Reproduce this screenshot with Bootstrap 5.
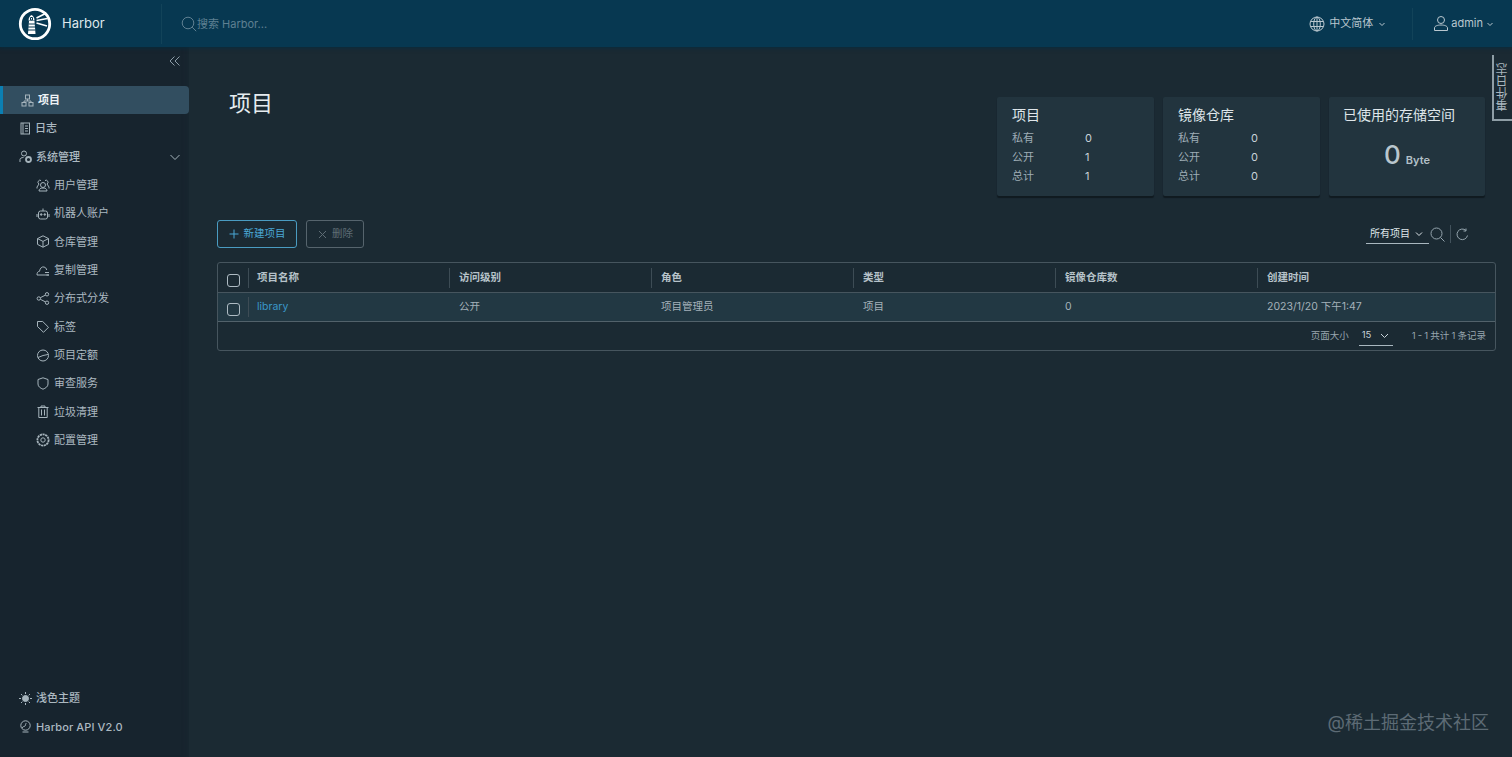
<!doctype html>
<html lang="zh-CN">
<head>
<meta charset="utf-8">
<title>Harbor</title>
<link href="https://cdn.jsdelivr.net/npm/bootstrap@5.3.0/dist/css/bootstrap.min.css" rel="stylesheet">
<style>
html,body{height:100%;overflow:hidden}
body{background:#1b2a33;color:#c5d0d6;font-family:"Inter","Noto Sans CJK SC",sans-serif;font-size:11px}
svg{fill:none;stroke:currentColor;stroke-width:1;flex:none}
.hb-top{height:47px;background:#073851;box-shadow:0 1px 4px rgba(6,44,64,.9);color:#adbbc4;position:relative;z-index:3}
.hb-brand{width:162px;padding-left:18px;gap:10px;color:#dfe8ec;font-size:13px;border-right:1px solid #124359;height:40px}
.hb-search{padding-left:19px;color:#5f8092;font-size:11px;padding-top:1px}
.hb-sep{width:1px;height:32px;background:#124359;margin:0 20px 0 26px}
.hb-lang{color:#b9c7cf;font-size:11px;gap:4px;white-space:nowrap}
.hb-lang>span+svg{margin-left:1px}
.hb-end{margin-right:18px;gap:2px}
.hb-side{width:189px;background:#17242e;flex:none;height:710px;box-shadow:inset -6px 0 6px -6px #1b2a33}
.hb-collapse{height:39px;padding:8px 8px 0 0;color:#8b9ba6}
.hb-item{height:28.33px;color:#acb9c1;font-size:11px;font-weight:500;padding-left:19px;gap:4px}
.hb-item svg{color:#a6b4bc}
.hb-item.hb-sub{padding-left:36px;gap:4px;font-weight:400}
.hb-item.hb-on{background:#324e60;color:#eef3f6;border-radius:0 4px 4px 0;border-left:3px solid #0b7fb3;padding-left:18px;font-weight:700}
.hb-api{letter-spacing:.12px}
.hb-main{padding:0 16px 0 28px;position:relative}
.hb-title{font-size:22px;color:#e6ecef;margin:38px 0 0 12px;line-height:36px;font-weight:400}
.hb-stat{width:157px;height:99px;background:#22343e;box-shadow:0 2px 1px #101a20;border-radius:2px;padding:8px 15px;flex:none}
.hb-stat.hb-store{width:156px;padding:8px 14px}
.hb-stat h6{font-size:14px;font-weight:400;color:#dfe6ea;margin:0 0 4px;line-height:20px;white-space:nowrap}
.hb-line{height:19px;color:#9fadb6;display:flex;align-items:center}
.hb-line span:first-child{width:73px}
.hb-line span:last-child{color:#c8d2d8}
.hb-stats{margin:50px 11px 0 0;gap:9px}
.hb-size-wrap{margin-top:15px}
.hb-big{font-size:26px;font-weight:500;color:#b9c6cd;line-height:30px}
.hb-unit{font-size:11px;font-weight:600;color:#b3c0c8;margin-left:5px}
.hb-btn{height:28px;font-size:10.5px;border-radius:3px;padding:0 10.5px;background:transparent;gap:5px;display:inline-flex;align-items:center}
.hb-new{border:1px solid #4a9cc2;color:#4aa8d6}
.hb-new:hover{color:#4aa8d6;border-color:#4a9cc2}
.hb-del,.hb-del:disabled{border:1px solid #56646d;color:#5f6d75;margin-left:9px;opacity:1;padding:0 10px 0 11px}
.hb-tools{color:#95a5ae}
.hb-filter{width:63px;height:20px;border-bottom:1px solid #a9b7bf;color:#dfe6ea;font-size:10px;padding:0 4px;gap:5px;white-space:nowrap}
.hb-find{margin-left:1px}
.hb-vbar{width:1px;height:18px;background:#42525c;margin:0 5px}
.hb-gap{display:inline-block;width:27px}
.hb-grid{margin:14px 0 0;height:89px;border:1px solid #46555e;border-radius:3px;overflow:hidden}
.hb-grid table{table-layout:fixed;width:100%;margin:0;--bs-table-bg:transparent;--bs-table-color:#a5b2ba;color:#a5b2ba}
.hb-grid th,.hb-grid td{height:29px;padding:0;border:0;vertical-align:middle;font-size:10.5px}
.hb-grid thead tr{border-bottom:1px solid #46555e}
.hb-grid th{color:#b6c2c9;font-weight:600;padding-top:2px}
.hb-grid tbody tr{background:#223843;border-bottom:1px solid #52626b}
.hb-cell{display:flex;align-items:center;height:20px;border-left:1px solid #3d4c55;padding-left:9px}
.hb-cell.hb-first{padding-left:8px}
.hb-cell.hb-plain{border-left-color:transparent}
.hb-link{color:#3a97c8;text-decoration:none}
.hb-check{display:flex;justify-content:center;align-items:center;height:14px;position:relative;top:3px}
.hb-grid th .hb-check{top:2px}
.hb-check i{display:block;width:13px;height:13px;border:1px solid #aebbc3;border-radius:3px;margin-left:1px}
.hb-foot{height:29px;padding-right:9px;color:#98a6af;font-size:9.5px;word-spacing:-.5px}
.hb-size{width:34px;height:19px;border-bottom:1px solid #a9b7bf;color:#c8d3d9;margin:0 19px 0 10px;padding:0 3px;gap:9px}
.hb-tab{position:absolute;top:55px;right:0;width:20px;height:66px;border-left:2px solid #8f9ea6;border-bottom:2px solid #8f9ea6;background:#1b2a33;color:#a9b6be;font-size:12px;writing-mode:vertical-rl;display:flex;align-items:center;justify-content:center;z-index:2}
.hb-tab span{transform:rotate(180deg);display:block}
.hb-mark{position:absolute;right:23px;bottom:23px;color:#5d6b75;font-size:18px;line-height:22px;z-index:2;white-space:nowrap}
</style>
</head>
<body>
<nav class="hb-top d-flex align-items-center">
  <div class="hb-brand d-flex align-items-center">
    <svg width="34" height="34" viewBox="0 0 34 34"><circle cx="17" cy="17" r="14.700" stroke-width="2.800" stroke="#fff"/><path d="M10.500 13.500c0-3 1.500-4.500 3-5.500 1.500 1 3 2.500 3 5.500z" fill="#fff" stroke="none"/><path d="M11 14l-1 13h7.500l-1-13z" fill="#fff" stroke="none"/><path d="M12.500 10.500h2v2.500h-2zM10.500 17h6.500M10.200 20h7M10 23h7.500" stroke="#073851" stroke-width="1"/><path d="M18.500 11l9-4.500M18.500 13.500l11-2M18.500 16l10.500 3" stroke="#fff" stroke-width="1.600"/></svg>
    <span>Harbor</span>
  </div>
  <div class="hb-search d-flex align-items-center flex-grow-1">
    <svg width="16" height="16" viewBox="0 0 16 16" stroke="#7b99a9"><circle cx="7" cy="7" r="5.800"/><path d="M11.200 11.200l4 4"/></svg>
    <span>搜索 Harbor...</span>
  </div>
  <div class="hb-lang d-flex align-items-center">
    <svg width="16" height="16" viewBox="0 0 16 16"><circle cx="8" cy="8" r="7"/><ellipse cx="8" cy="8" rx="3.300" ry="7"/><path d="M8 1v14M1.500 5.500h13M1.500 10.500h13"/></svg>
    <span>中文简体</span>
    <svg width="8" height="8" viewBox="0 0 8 8"><path d="M1.500 3l2.500 2.500L6.500 3"/></svg>
  </div>
  <div class="hb-sep"></div>
  <div class="hb-lang hb-end d-flex align-items-center">
    <svg width="16" height="17" viewBox="0 0 16 17"><circle cx="8" cy="5" r="3.500"/><path d="M1.500 15.500v-2.500c0-2 3-3 6.500-3s6.500 1 6.500 3v2.500z"/></svg>
    <span>admin</span>
    <svg width="8" height="8" viewBox="0 0 8 8"><path d="M1.500 3l2.500 2.500L6.500 3"/></svg>
  </div>
</nav>
<div class="d-flex">
  <aside class="hb-side d-flex flex-column">
    <div class="hb-collapse d-flex justify-content-end align-items-start">
      <svg width="12" height="12" viewBox="0 0 12 12"><path d="M5.500 1.500L1 6l4.500 4.500M10.500 1.500L6 6l4.500 4.500"/></svg>
    </div>
    <div class="hb-item hb-on d-flex align-items-center"><svg width="13" height="13" viewBox="0 0 13 13"><rect x="4.500" y="1" width="4" height="4"/><rect x="1" y="8.500" width="4" height="3.500"/><rect x="8" y="8.500" width="4" height="3.500"/><path d="M6.500 5v2M3 8.500V7h7v1.500"/></svg><span>项目</span></div>
    <div class="hb-item d-flex align-items-center"><svg width="12" height="13" viewBox="0 0 12 13"><rect x="2" y="1" width="8.500" height="11"/><path d="M4 1v11M6 4h3M6 6.500h3M6 9h3"/></svg><span>日志</span></div>
    <div class="hb-item d-flex align-items-center"><svg width="13" height="13" viewBox="0 0 13 13"><circle cx="5" cy="3.500" r="2.500"/><path d="M1 12V9.500c0-1.200 1.500-2 3.500-2"/><circle cx="9.500" cy="9.500" r="2.500" stroke-width="1.800"/></svg><span>系统管理</span>
      <svg class="ms-auto me-2" width="12" height="12" viewBox="0 0 12 12"><path d="M1.500 4L6 8.500 10.500 4"/></svg></div>
    <div class="hb-item hb-sub d-flex align-items-center"><svg width="14" height="13" viewBox="0 0 14 13"><circle cx="7" cy="6" r="2.500"/><path d="M3 12c0-2 1.500-3 4-3s4 1 4 3zM5 1.500a2 2 0 0 0-2 3.500L1 8v1.500M9 1.500a2 2 0 0 1 2 3.500l2 3v1.500"/></svg><span>用户管理</span></div>
    <div class="hb-item hb-sub d-flex align-items-center"><svg width="14" height="13" viewBox="0 0 14 13"><rect x="2.500" y="4" width="9" height="8" rx="2"/><path d="M7 1.500V4M1 7v3M13 7v3"/><circle cx="5.200" cy="7.500" r=".8" fill="currentColor"/><circle cx="8.800" cy="7.500" r=".8" fill="currentColor"/></svg><span>机器人账户</span></div>
    <div class="hb-item hb-sub d-flex align-items-center"><svg width="14" height="13" viewBox="0 0 14 13"><path d="M7 .8l5.500 2.800v5.800L7 12.200 1.500 9.400V3.600zM1.500 3.600L7 6.400l5.500-2.800M7 6.400v5.800"/></svg><span>仓库管理</span></div>
    <div class="hb-item hb-sub d-flex align-items-center"><svg width="14" height="13" viewBox="0 0 14 13"><path d="M1 11c0-2.500.8-3.500 2.500-3.700C4 4 6 2.500 8 3c1.500.4 2.500 1.500 2.700 3M1 11h12M9 8.500h4M10.500 11h2.500"/></svg><span>复制管理</span></div>
    <div class="hb-item hb-sub d-flex align-items-center"><svg width="14" height="13" viewBox="0 0 14 13"><circle cx="2.800" cy="6.500" r="1.700"/><circle cx="11" cy="2.300" r="1.700"/><circle cx="11" cy="10.700" r="1.700"/><path d="M4.300 5.700L9.500 3.100M4.300 7.300l5.200 2.600"/></svg><span>分布式分发</span></div>
    <div class="hb-item hb-sub d-flex align-items-center"><svg width="14" height="13" viewBox="0 0 14 13"><path d="M1.500 1.500h5.200l5.800 5.800-5 5-6-5.800z" stroke-linejoin="round"/></svg><span>标签</span></div>
    <div class="hb-item hb-sub d-flex align-items-center"><svg width="14" height="13" viewBox="0 0 14 13"><circle cx="7" cy="6.500" r="5.500"/><path d="M2 8.500L7 6.500l5-1"/></svg><span>项目定额</span></div>
    <div class="hb-item hb-sub d-flex align-items-center"><svg width="14" height="13" viewBox="0 0 14 13"><path d="M7 .8l5 1.700v4.500c0 2.600-2.500 4.300-5 5.200-2.500-.9-5-2.600-5-5.200V2.500z"/></svg><span>审查服务</span></div>
    <div class="hb-item hb-sub d-flex align-items-center"><svg width="14" height="13" viewBox="0 0 14 13"><path d="M1.500 2.500h11M5 2.500V1h4v1.500M2.800 2.500v10h8.400v-10M5.500 4.500v6M8.500 4.500v6"/></svg><span>垃圾清理</span></div>
    <div class="hb-item hb-sub d-flex align-items-center"><svg width="14" height="14" viewBox="0 0 14 14"><circle cx="7" cy="7" r="2.200"/><circle cx="7" cy="7" r="5.600" stroke-width="1.800" stroke-dasharray="2.200 .6"/></svg><span>配置管理</span></div>
    <div class="mt-auto pb-3">
      <div class="hb-item d-flex align-items-center"><svg width="13" height="13" viewBox="0 0 13 13"><circle cx="6.500" cy="6.500" r="3" fill="currentColor"/><path d="M6.500 0v2M6.500 11v2M0 6.500h2M11 6.500h2M2 2l1.400 1.400M9.600 9.600L11 11M2 11l1.400-1.400M9.600 3.400L11 2"/></svg><span>浅色主题</span></div>
      <div class="hb-item d-flex align-items-center"><svg width="13" height="13" viewBox="0 0 13 13"><circle cx="6.500" cy="5.500" r="4.700"/><path d="M3 8c1-2 2-1 3-2s0-2 1.500-3M3.500 12h6"/></svg><span class="hb-api">Harbor API V2.0</span></div>
    </div>
  </aside>
  <main class="hb-main flex-grow-1">
    <div class="d-flex justify-content-between align-items-start">
      <h2 class="hb-title">项目</h2>
      <div class="hb-stats d-flex">
        <div class="hb-stat"><h6>项目</h6><div class="hb-line"><span>私有</span><span>0</span></div><div class="hb-line"><span>公开</span><span>1</span></div><div class="hb-line"><span>总计</span><span>1</span></div></div>
        <div class="hb-stat"><h6>镜像仓库</h6><div class="hb-line"><span>私有</span><span>0</span></div><div class="hb-line"><span>公开</span><span>0</span></div><div class="hb-line"><span>总计</span><span>0</span></div></div>
        <div class="hb-stat hb-store"><h6>已使用的存储空间</h6><div class="text-center hb-size-wrap"><span class="hb-big">0</span><span class="hb-unit">Byte</span></div></div>
      </div>
    </div>
    <div class="d-flex justify-content-between align-items-center mt-4">
      <div class="d-flex">
        <a href="#" class="hb-btn hb-new btn"><svg width="10" height="10" viewBox="0 0 10 10"><path d="M5 .5v9M.5 5h9"/></svg>新建项目</a>
        <button type="button" class="hb-btn hb-del btn" disabled><svg width="9" height="9" viewBox="0 0 9 9"><path d="M1 1l7 7M8 1L1 8"/></svg>删除</button>
      </div>
      <div class="hb-tools d-flex align-items-center">
        <div class="hb-filter d-flex align-items-center"><span>所有项目</span><svg width="8" height="8" viewBox="0 0 8 8"><path d="M1 2.500l3 3 3-3"/></svg></div>
        <svg class="hb-find" width="15" height="15" viewBox="0 0 15 15"><circle cx="6.500" cy="6.500" r="5.500"/><path d="M10.500 10.500l4 4"/></svg>
        <div class="hb-vbar"></div>
        <svg width="13" height="13" viewBox="0 0 13 13"><path d="M11.500 7.500a5.300 5.300 0 1 1-1.500-5M10 .5v2.500H7.500"/></svg>
        <span class="hb-gap"></span>
      </div>
    </div>
    <div class="hb-grid">
      <table class="table">
        <colgroup><col style="width:30px"><col style="width:201px"><col style="width:202px"><col style="width:202px"><col style="width:202px"><col style="width:202px"><col></colgroup>
        <thead><tr>
          <th><div class="hb-check"><i></i></div></th>
          <th><div class="hb-cell hb-first">项目名称</div></th><th><div class="hb-cell">访问级别</div></th><th><div class="hb-cell">角色</div></th><th><div class="hb-cell">类型</div></th><th><div class="hb-cell">镜像仓库数</div></th><th><div class="hb-cell">创建时间</div></th>
        </tr></thead>
        <tbody><tr>
          <td><div class="hb-check"><i></i></div></td>
          <td><div class="hb-cell hb-first"><a class="hb-link" href="#">library</a></div></td>
          <td><div class="hb-cell hb-plain">公开</div></td><td><div class="hb-cell hb-plain">项目管理员</div></td><td><div class="hb-cell hb-plain">项目</div></td><td><div class="hb-cell hb-plain">0</div></td><td><div class="hb-cell hb-plain">2023/1/20 下午1:47</div></td>
        </tr></tbody>
      </table>
      <div class="hb-foot d-flex justify-content-end align-items-center">
        <span>页面大小</span>
        <div class="hb-size d-flex align-items-center"><span>15</span><svg width="9" height="9" viewBox="0 0 9 9"><path d="M1 3l3.500 3.500L8 3"/></svg></div>
        <span>1 - 1 共计 1 条记录</span>
      </div>
    </div>
  </main>
</div>
<div class="hb-tab"><span>事件日志</span></div>
<div class="hb-mark">@稀土掘金技术社区</div>
<script src="https://cdn.jsdelivr.net/npm/bootstrap@5.3.0/dist/js/bootstrap.bundle.min.js"></script>
</body>
</html>
